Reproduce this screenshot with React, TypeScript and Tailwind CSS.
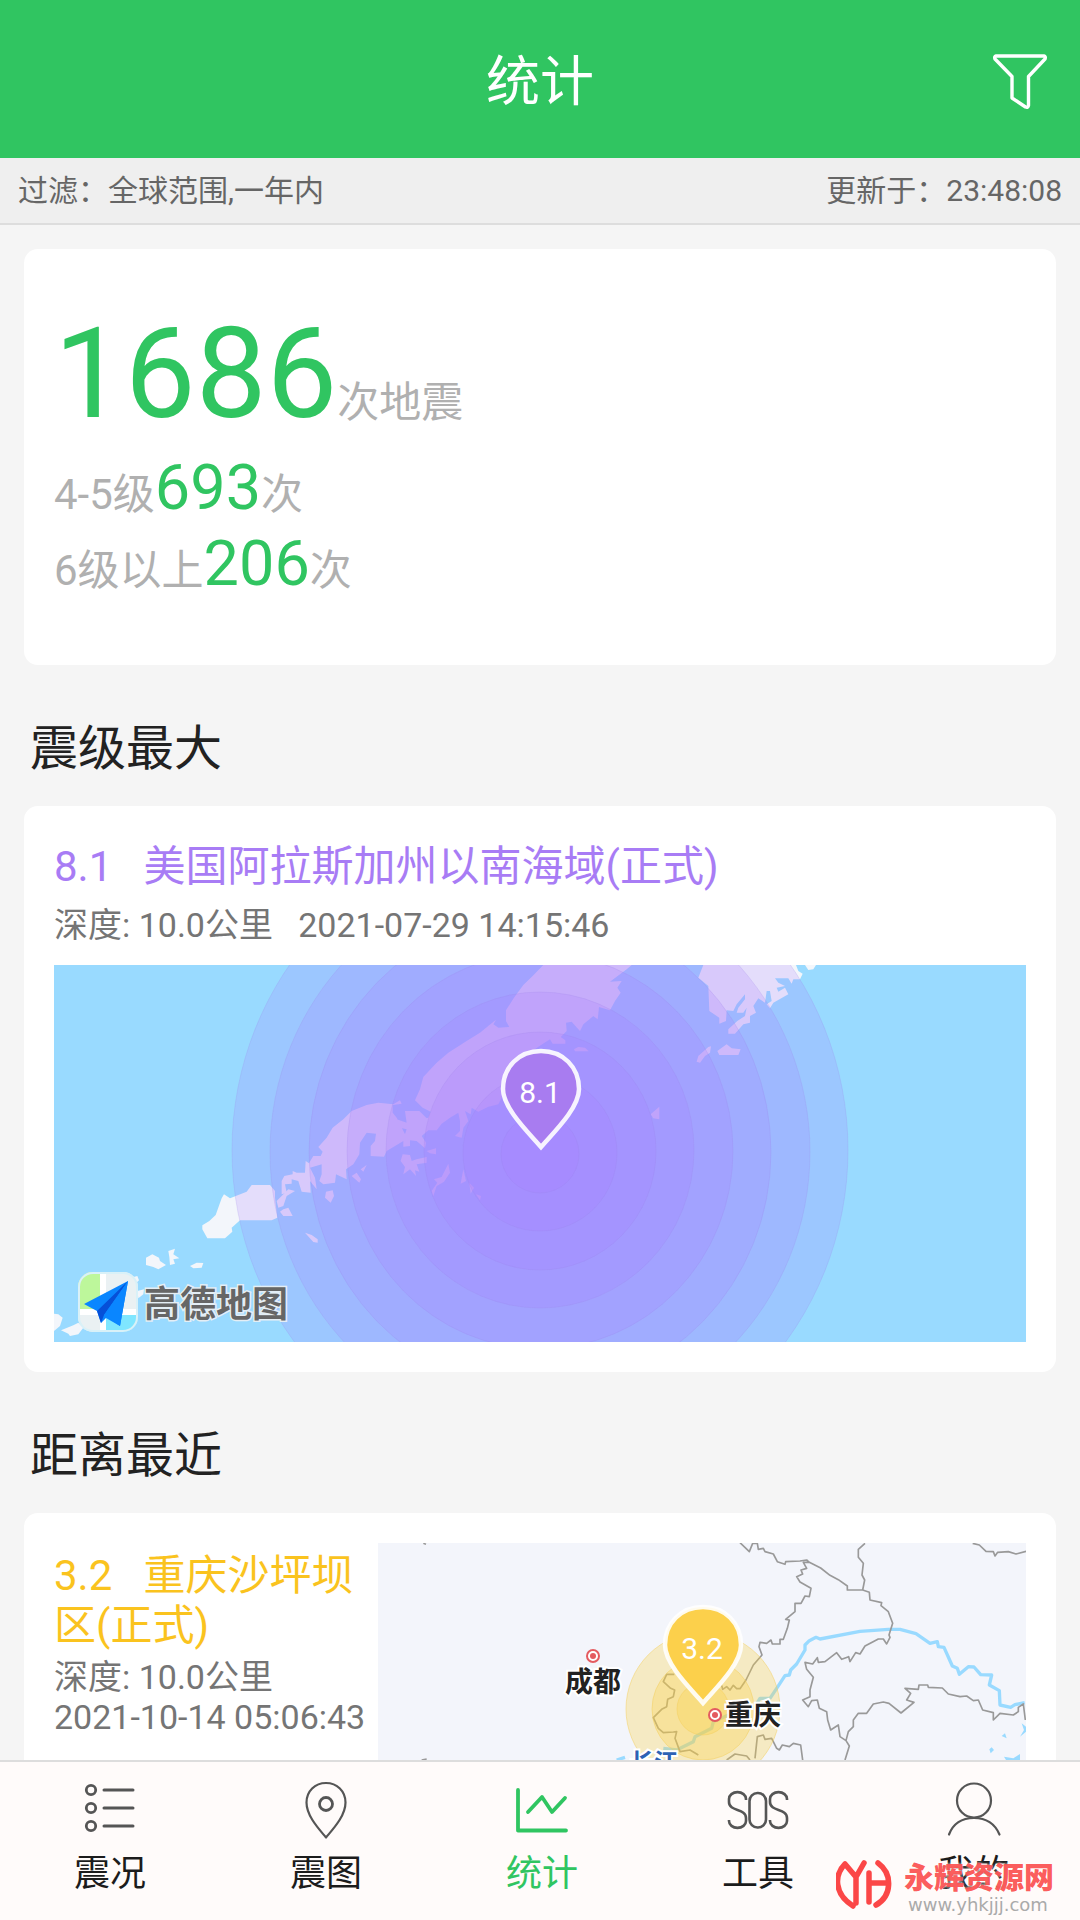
import type { ReactNode } from "react";

const LAND = "#f3f6fb";

/* Shockwave rings: each outer ring is drawn slightly taller to follow the map projection. */
const RINGS = [
  { rx: 308, ry: 318, cy: 185 },
  { rx: 270, ry: 276, cy: 187 },
  { rx: 231, ry: 239, cy: 187 },
  { rx: 193, ry: 198, cy: 186 },
  { rx: 154, ry: 158, cy: 185 },
  { rx: 116, ry: 119, cy: 186 },
  { rx: 77, ry: 78, cy: 188 },
  { rx: 39, ry: 39, cy: 189 },
];

function FilterIcon() {
  return (
    <svg viewBox="0 0 120 120" className="size-30" fill="none" stroke="white" strokeWidth="3.4" strokeLinejoin="round" aria-hidden="true">
      <path d="M36 37H84Q86 37.500 85 40L68.500 57.500V86.500Q68 89 65.500 88L52 79V57.500L35 40Q34 37.500 36 37Z" />
    </svg>
  );
}

function ListIcon() {
  return (
    <>
      {[10, 28, 46].map((y) => (
        <g key={y}>
          <ellipse cx="13" cy={y} rx="4.700" ry="4.700" strokeWidth="2.800" />
          <path d={`M26 ${y}H55`} strokeWidth="3" />
        </g>
      ))}
    </>
  );
}

function PinIcon() {
  return (
    <>
      <path d="M32 57.500C25 49 12.500 36 12.500 22.500C12.500 11 21 3 32 3S51.500 11 51.500 22.500C51.500 36 39 49 32 57.500Z" strokeWidth="2.200" />
      <circle cx="32" cy="24" r="6.500" strokeWidth="2.800" />
    </>
  );
}

function ChartIcon() {
  return <path d="M8 10V50.500H56M18 32L32 17L42 32L55 18" strokeWidth="3.800" />;
}

function SosIcon() {
  return (
    <>
      <path d="M20 20V19A8 6.500 0 0 0 3 19V22C3 32 20 28 20 38V41A8 6.500 0 0 1 3 41V40" strokeWidth="2.600" strokeLinecap="butt" />
      <rect x="23.500" y="13" width="16.500" height="34.500" rx="8" strokeWidth="2.600" />
      <path d="M61 20V19A8 6.500 0 0 0 44 19V22C44 32 61 28 61 38V41A8 6.500 0 0 1 44 41V40" strokeWidth="2.600" strokeLinecap="butt" />
    </>
  );
}

function PersonIcon() {
  return (
    <>
      <ellipse cx="32" cy="20.500" rx="17" ry="17" strokeWidth="2.200" />
      <path d="M7 54.500C11 44 20 38 32 38S53 44 57.500 54.500" strokeWidth="2.200" />
    </>
  );
}

function MapPin({ x, y, color, label }: { x: number; y: number; color: string; label: string }) {
  return (
    <g transform={`translate(${x} ${y})`}>
      <path
        d="M0 0C-10 -12 -38 -38 -38 -58C-38 -80 -22 -96 0 -96S38 -80 38 -58C38 -38 10 -12 0 0Z"
        fill={color}
        stroke="white"
        strokeOpacity=".9"
        strokeWidth="4.500"
      />
      <text x="-1" y="-44" textAnchor="middle" fill="white" className="font-[Roboto] text-[30px]">
        {label}
      </text>
    </g>
  );
}

function AlaskaMap() {
  return (
    <svg viewBox="0 0 972 377" className="mt-[13px] block w-full bg-[#99daff]" role="img" aria-label="美国阿拉斯加州以南海域">
      <g transform="translate(-4 -4) scale(.33333)" fill={LAND}>
        <path d="M1480 12L1448 45L1420 72L1392 110L1368 148V180L1378 198L1345 200L1330 190L1338 176L1290 215L1250 240L1195 275L1160 305L1120 348L1110 385L1095 418L1118 440L1142 452L1135 470L1130 472L1108 450H1065L1070 485L1040 475L1050 500L1070 505L1065 520L1040 470L1028 455V432L1055 428L1050 418L1030 430L985 425L950 432L905 450L880 475L848 500L830 530L805 558L818 572L812 585H790L777 607L767 600L765 635L740 635L728 630V640L703 645L695 660V700L710 695L705 670L725 668V655L745 660L755 692L782 695L780 660L800 685L795 650L780 620L815 610V640L808 660L820 670L855 665L858 640L890 655L888 625L910 610L928 580L930 545L950 515L978 518L975 540L962 555V585L1002 587L1010 570L1060 540V557L1080 555V538L1100 540L1125 562L1128 545L1115 525L1135 508H1160L1175 488L1200 470L1225 455L1230 480V510L1215 525L1235 530L1240 500L1255 480L1245 450L1262 460L1265 440L1285 452L1315 437L1345 430L1370 380L1420 290L1465 257L1500 235L1508 248H1546V238L1532 228L1550 210L1548 185L1565 182L1590 210L1600 190L1630 165L1643 175L1647 138L1680 148L1695 120L1712 95L1702 80L1715 60L1680 62L1730 25L1745 12Z" />
        <path d="M1058 580L1080 582L1085 600L1100 595L1130 588V605L1100 610L1108 632L1095 628L1098 645L1080 625L1060 640L1065 618L1052 600ZM1130 570L1158 562V580L1140 577ZM1195 608L1200 635L1182 662L1160 675L1150 705L1145 690L1162 665L1152 655L1175 648ZM1240 625L1248 660L1232 668ZM1258 665L1272 680L1262 698ZM1278 700L1293 705L1290 718ZM950 612L940 632L932 625ZM905 645L920 635L933 655L928 665ZM828 692L848 688L852 705L842 725L825 710ZM700 745L715 740L728 765L700 765L690 752ZM765 815L785 822L803 835V845L790 843ZM680 720L715 685L735 690L710 705L700 735L685 740Z" />
        <path d="M522 700L540 712L590 692L605 672H660L675 690L675 710L682 770L665 778H570L545 800L547 812L525 832H472L457 805V793L478 780L497 762L515 712ZM288 890L307 880L327 890L330 900L348 912L325 925L310 918L288 912ZM355 870L375 863L370 880L388 892L370 895L375 908L360 912L358 888ZM420 915L440 905L460 906L455 920L430 922ZM242 950L262 945L267 958L255 970ZM262 990L282 985L280 1000L265 1012ZM12 1058L25 1060L38 1070L30 1095L12 1110ZM33 1108L70 1093L85 1085L100 1100L85 1120L60 1125L55 1118Z" />
        <path d="M1960 12L1945 50L1975 75L1978 150L2008 170V188L2028 180L2030 148L2050 150L2060 130L2085 100L2085 115L2065 140L2060 155L2080 155L2090 140L2085 165L2062 180L2035 205L2035 218L2055 218L2080 190L2100 185L2100 165L2118 155L2110 135L2125 112L2145 125L2150 90L2160 90L2165 120L2150 130L2160 142L2170 125L2215 100L2205 80L2185 92L2180 80L2205 75L2185 65L2175 52L2215 52L2225 68L2230 55H2250L2258 38L2245 30L2238 12ZM2265 12L2275 27L2290 25L2298 12ZM2002 270L2030 250L2045 262L2072 265L2065 282H2008ZM1975 258L1983 256L1980 275L1965 285L1950 305L1940 302L1945 285ZM1572 265L1585 258L1605 260L1616 271H1575ZM1802 460L1828 437V475L1810 472Z" />
      </g>
      {RINGS.map((r) => (
        <ellipse key={r.rx} cx="486" cy={r.cy} rx={r.rx} ry={r.ry} fill="#a87cff" fillOpacity=".2" stroke="#9a80e8" strokeOpacity=".2" />
      ))}
      <MapPin x={487} y={182} color="#a87cf0" label="8.1" />
      <g transform="translate(24 307)">
        <clipPath id="badge">
          <rect width="60" height="60" rx="15" />
        </clipPath>
        <g clipPath="url(#badge)">
          <rect width="60" height="60" fill="#eaf1f3" />
          <rect width="23" height="38" fill="#bdf79b" />
          <rect x="28" y="42" width="32" height="18" fill="#7fe6ff" />
          <path d="M25 0V60M0 40H60" stroke="white" strokeWidth="6" />
        </g>
        <rect x="1" y="1" width="58" height="58" rx="14" fill="none" stroke="#d9f1f8" strokeWidth="2" />
        <path d="M50 9L6 32L19 39L23 51L28 46L42 54Z" fill="#0a86ff" />
        <path d="M50 9L19 39L23 51L26 43Z" fill="#0650d8" />
        <path d="M50 9L26 43L42 54Z" fill="#0a86ff" />
      </g>
      <text x="90" y="352" fill="#666" stroke="#e4eef5" strokeWidth="3" paintOrder="stroke" className="font-['Noto_Sans_CJK_SC',sans-serif] text-[36px] font-bold">
        高德地图
      </text>
    </svg>
  );
}

function CityDot({ x, y }: { x: number; y: number }) {
  return (
    <g transform={`translate(${x} ${y})`}>
      <circle r="6" fill="white" stroke="#e45b60" strokeWidth="2" />
      <circle r="3" fill="#e45b60" />
    </g>
  );
}

function ChongqingMap() {
  return (
    <svg viewBox="0 0 648 377" className="block w-full bg-[#f3f5fb]" role="img" aria-label="重庆沙坪坝区">
      <g transform="translate(322 -13) scale(.33333)" fill="none" strokeLinejoin="round">
        <path
          d="M-250 690L-225 682M-110 655L-70 660L-20 635L-15 620L35 595L40 575L85 555L165 530L180 505L210 505L232 472L255 437L268 435L272 420L290 402L315 360V345L328 332L348 322L360 327L480 304L565 298H600L648 311L690 340L712 335L715 350L732 352L757 408L772 415L778 433L805 410L822 411L842 434L875 435L868 465L898 482L900 525L932 532L945 524L974 518"
          stroke="#99daff"
          strokeWidth="10"
        />
        <path
          d="M120 38L148 65L158 40H172L175 58L190 55L195 65L220 72L232 95L255 103L257 95L300 93L320 90L328 97L362 114L390 136L415 149L442 168V180H488L508 187L510 210L545 218L543 227L565 245L578 280L567 315L570 322L560 342L550 327H535L495 348L480 372L467 368L450 395L446 380L425 388L410 368L375 395L355 397L352 383L338 402L315 397L320 418L340 442L330 480V500L308 510L325 530L335 512L352 510L358 535L380 545L383 570L392 600L415 585L420 620L438 632L448 648L435 690M438 632L445 605L460 590V570L475 550H500L520 522L550 516L567 520L603 549L642 517L620 510L632 490L615 475L655 478L657 465L683 465L685 472L727 474L745 492L780 500L800 498L820 512L835 510L848 540L880 548V570L900 550L940 555L955 545L955 532L970 522L976 570M495 40L475 58V82L490 100L486 135L494 150L488 180M328 97H310L320 115L303 120L308 132L290 140L300 156L333 175L328 200L315 198L303 220L285 220V245L257 268L268 270L262 295L250 328H240L240 342H217L213 330L200 340L180 337L177 350L186 375L160 405L138 450L120 476H110L100 466L90 480L80 470L68 478L65 466M818 40L838 45L858 64L880 65L885 78L893 67L925 65L948 72L978 64M-77 433H-100L-110 455L-88 475L-76 480L-80 500L-97 508L-100 530L-115 538L-140 563L-125 595L-110 608L-80 606L-70 605L-75 625L-60 665L-30 660L-5 675M165 685L172 620L190 615L195 628L215 625L230 655L238 660L247 645L268 650L280 640L302 645L308 690M80 690L105 672L140 678L150 690M-830 40L-822 43M-835 690L-820 687"
          stroke="#999"
          strokeWidth="5"
        />
        <path d="M905 618L915 610L920 625ZM868 658L875 652L882 660L872 670ZM912 680L940 685L960 672V690H918ZM960 620L972 600L965 580L978 590V605Z" fill="#99daff" />
      </g>
      {[77, 51, 26].map((r) => (
        <circle key={r} cx="325" cy="166" r={r} fill="#fbd043" fillOpacity=".3" stroke="#f3cf60" strokeOpacity=".5" />
      ))}
      <CityDot x={215} y={113} />
      <g stroke="white" strokeWidth="4" paintOrder="stroke" className="font-['Noto_Sans_CJK_SC',sans-serif] text-[28px] font-bold">
        <text x="187" y="149" fill="#222">成都</text>
        <text x="347" y="182" fill="#222">重庆</text>
        <text x="252" y="228" fill="#2d62b5" className="text-[24px]">长江</text>
      </g>
      <MapPin x={325} y={160} color="#fcd04b" label="3.2" />
      <CityDot x={337} y={172} />
    </svg>
  );
}

function Card({ className = "p-[30px]", children }: { className?: string; children: ReactNode }) {
  return <section className={`rounded-[14px] bg-white ${className}`}>{children}</section>;
}

function SectionTitle({ children }: { children: ReactNode }) {
  return <h2 className="px-[6px] pt-[48px] pb-[22px] text-[48px] leading-[71px] text-[#222]">{children}</h2>;
}

function CountLine({ before, value, after }: { before: string; value: string; after: string }) {
  return (
    <p className="text-[42px] leading-[75px]">
      {before}
      <span className="text-[63px] leading-none text-[#30c561]">{value}</span>
      {after}
    </p>
  );
}

const TABS = [
  { label: "震况", icon: <ListIcon /> },
  { label: "震图", icon: <PinIcon /> },
  { label: "统计", icon: <ChartIcon />, active: true },
  { label: "工具", icon: <SosIcon /> },
  { label: "我的", icon: <PersonIcon /> },
];

function Watermark() {
  return (
    <div className="pointer-events-none absolute right-[26px] bottom-[6px] flex items-start gap-3">
      <svg viewBox="0 0 56 50" className="h-[50px] w-[56px]" fill="none" stroke="#fb4747" strokeWidth="5.500" strokeLinecap="round" strokeLinejoin="round" aria-hidden="true">
        <path d="M17 46C-2 34 -2 15 9 4L20 17L28 3M20 17V43M33 42V13M33 23H50M42 3C57 14 56 36 40 45" />
      </svg>
      <div className="flex flex-col">
        <span className="text-[30px] leading-[36px] font-black text-[#fb4747]/90 [text-shadow:0_0_3px_white]">永辉资源网</span>
        <span className="pl-1 font-['DejaVu_Sans',sans-serif] text-[18px] leading-[18px] text-[#aaa]">www.yhkjjj.com</span>
      </div>
    </div>
  );
}

export default function App() {
  return (
    <div className="flex h-screen flex-col bg-[#f5f5f5] font-[Roboto,'Noto_Sans_CJK_SC',sans-serif] text-[#222]">
      <header className="grid shrink-0 grid-cols-[1fr_auto_1fr] items-center bg-[#30c561] py-[19px] text-white">
        <h1 className="col-start-2 pt-2 text-[54px] leading-[78px]">统计</h1>
        <button type="button" aria-label="筛选" className="justify-self-end">
          <FilterIcon />
        </button>
      </header>
      <div className="flex shrink-0 items-center justify-between border-b-2 border-[#ddd] bg-[#efefef] px-[18px] text-[30px] leading-[65px] text-[#666]">
        <p>过滤：全球范围,一年内</p>
        <p>更新于：23:48:08</p>
      </div>

      <main className="min-h-0 flex-1 overflow-y-auto px-6 pt-6 [scrollbar-width:none]">
        <Card className="px-[30px] pt-[62px] pb-[57px] text-[#b0b0b0]">
          <p className="mb-[19px] text-[42px] leading-[60px]">
            <span className="text-[126px] leading-none text-[#30c561]">1686</span>次地震
          </p>
          <CountLine before="4-5级" value="693" after="次" />
          <CountLine before="6级以上" value="206" after="次" />
        </Card>

        <SectionTitle>震级最大</SectionTitle>
        <Card>
          <h3 className="text-[42px] leading-[62px] whitespace-pre-wrap text-[#a87cf5]">{"8.1   美国阿拉斯加州以南海域(正式)"}</h3>
          <p className="text-[34px] leading-[54px] whitespace-pre-wrap text-[#757575]">{"深度: 10.0公里   2021-07-29 14:15:46"}</p>
          <AlaskaMap />
        </Card>

        <SectionTitle>距离最近</SectionTitle>
        <Card className="grid grid-cols-[1fr_2fr] p-[30px]">
          <div className="pt-2">
            <h3 className="text-[42px] leading-[50px] whitespace-pre-wrap text-[#fac31e]">{"3.2   重庆沙坪坝区(正式)"}</h3>
            <p className="mt-[6px] text-[34px] leading-[40px] text-[#757575]">
              深度: 10.0公里
              <br />
              2021-10-14 05:06:43
            </p>
          </div>
          <ChongqingMap />
        </Card>
      </main>

      <nav className="relative grid shrink-0 grid-cols-5 border-t-2 border-[#ddd] bg-[#fffbfa]">
        {TABS.map((tab) => (
          <button
            key={tab.label}
            type="button"
            aria-current={tab.active ? "page" : undefined}
            className={`flex flex-col items-center pt-[18px] pb-5 pl-1 text-[36px] leading-[52px] ${tab.active ? "text-[#30c561]" : "text-[#1c1c1c]"}`}
          >
            <svg
              viewBox="0 0 64 60"
              className={`h-[60px] w-[64px] ${tab.active ? "text-[#30c561]" : "text-[#555]"}`}
              fill="none"
              stroke="currentColor"
              strokeLinecap="round"
              strokeLinejoin="round"
              aria-hidden="true"
            >
              {tab.icon}
            </svg>
            <span className="mt-2">{tab.label}</span>
          </button>
        ))}
        <Watermark />
      </nav>
    </div>
  );
}
